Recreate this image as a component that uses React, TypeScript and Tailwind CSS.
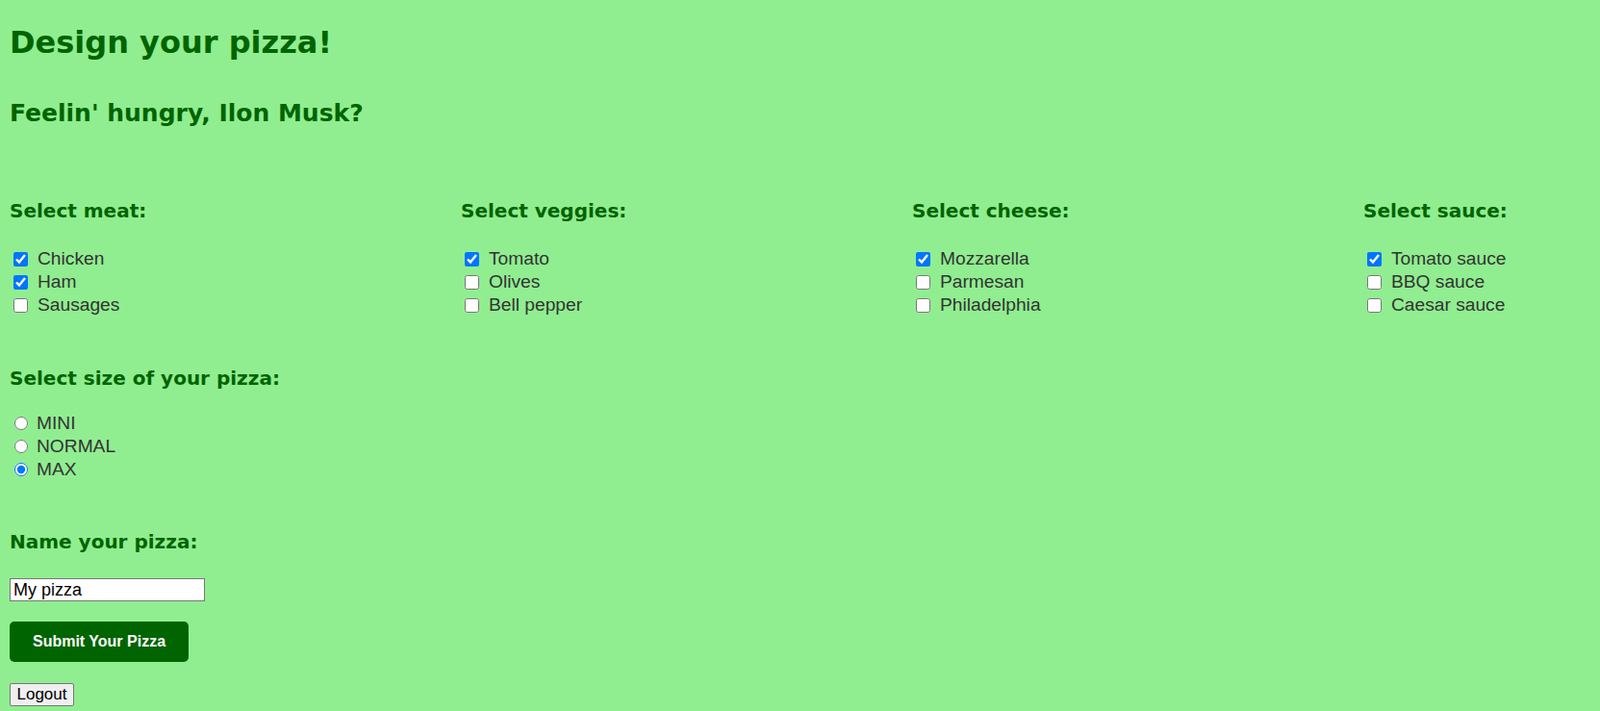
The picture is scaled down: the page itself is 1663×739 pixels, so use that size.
const groups: { title: string; items: { label: string; checked: boolean }[] }[] = [
  {
    title: "Select meat:",
    items: [
      { label: "Chicken", checked: true },
      { label: "Ham", checked: true },
      { label: "Sausages", checked: false },
    ],
  },
  {
    title: "Select veggies:",
    items: [
      { label: "Tomato", checked: true },
      { label: "Olives", checked: false },
      { label: "Bell pepper", checked: false },
    ],
  },
  {
    title: "Select cheese:",
    items: [
      { label: "Mozzarella", checked: true },
      { label: "Parmesan", checked: false },
      { label: "Philadelphia", checked: false },
    ],
  },
  {
    title: "Select sauce:",
    items: [
      { label: "Tomato sauce", checked: true },
      { label: "BBQ sauce", checked: false },
      { label: "Caesar sauce", checked: false },
    ],
  },
];

const sizes = ["MINI", "NORMAL", "MAX"];

const heading = "font-['Comic_Sans_MS','DejaVu_Sans',cursive] font-bold text-[#006400]";

function Section({ title, items }: (typeof groups)[number]) {
  return (
    <div className="w-[236px]">
      <h3 className={`${heading} text-[20px] leading-[26px]`}>{title}</h3>
      <div className="mt-[25px]">
        {items.map((item) => (
          <label key={item.label} className="flex h-[24px] items-center">
            <input
              type="checkbox"
              defaultChecked={item.checked}
              className="ml-[4px] mr-[10px] h-[15px] w-[15px]"
            />
            <span>{item.label}</span>
          </label>
        ))}
      </div>
    </div>
  );
}

export default function App() {
  return (
    <div className="min-h-[739px] bg-[#90ee90] px-[10px] pt-[1px] font-['Liberation_Sans',Arial,sans-serif] text-[19.2px] text-[#333]">
      <h1 className={`${heading} mt-[21px] text-[32px] leading-[44px]`}>Design your pizza!</h1>
      <h2 className={`${heading} mt-[35px] text-[25px] leading-[34px]`}>Feelin' hungry, Ilon Musk?</h2>

      <div className="mt-[71px] flex justify-between">
        {groups.map((g) => (
          <Section key={g.title} {...g} />
        ))}
      </div>

      <h3 className={`${heading} mt-[51px] text-[20px] leading-[26px]`}>Select size of your pizza:</h3>
      <div className="mt-[22px]">
        {sizes.map((s) => (
          <label key={s} className="flex h-[24px] items-center">
            <input
              type="radio"
              name="size"
              defaultChecked={s === "MAX"}
              className="ml-[5px] mr-[9px] h-[14px] w-[14px]"
            />
            <span>{s}</span>
          </label>
        ))}
      </div>

      <h3 className={`${heading} mt-[50px] text-[20px] leading-[26px]`}>Name your pizza:</h3>
      <input
        type="text"
        defaultValue="My pizza"
        className="mt-[25px] block h-[24px] w-[203px] border border-[#767676] bg-white px-[3px] text-[18px] text-black"
      />

      <button className="mt-[21px] block h-[42px] w-[186px] rounded-[5px] bg-[#006400] text-[16px] font-bold text-white">
        Submit Your Pizza
      </button>

      <button className="mt-[22px] block h-[24px] w-[67px] rounded-[2px] border border-[#767676] bg-[#efefef] text-[17px] leading-[20px] text-black">
        Logout
      </button>
    </div>
  );
}
